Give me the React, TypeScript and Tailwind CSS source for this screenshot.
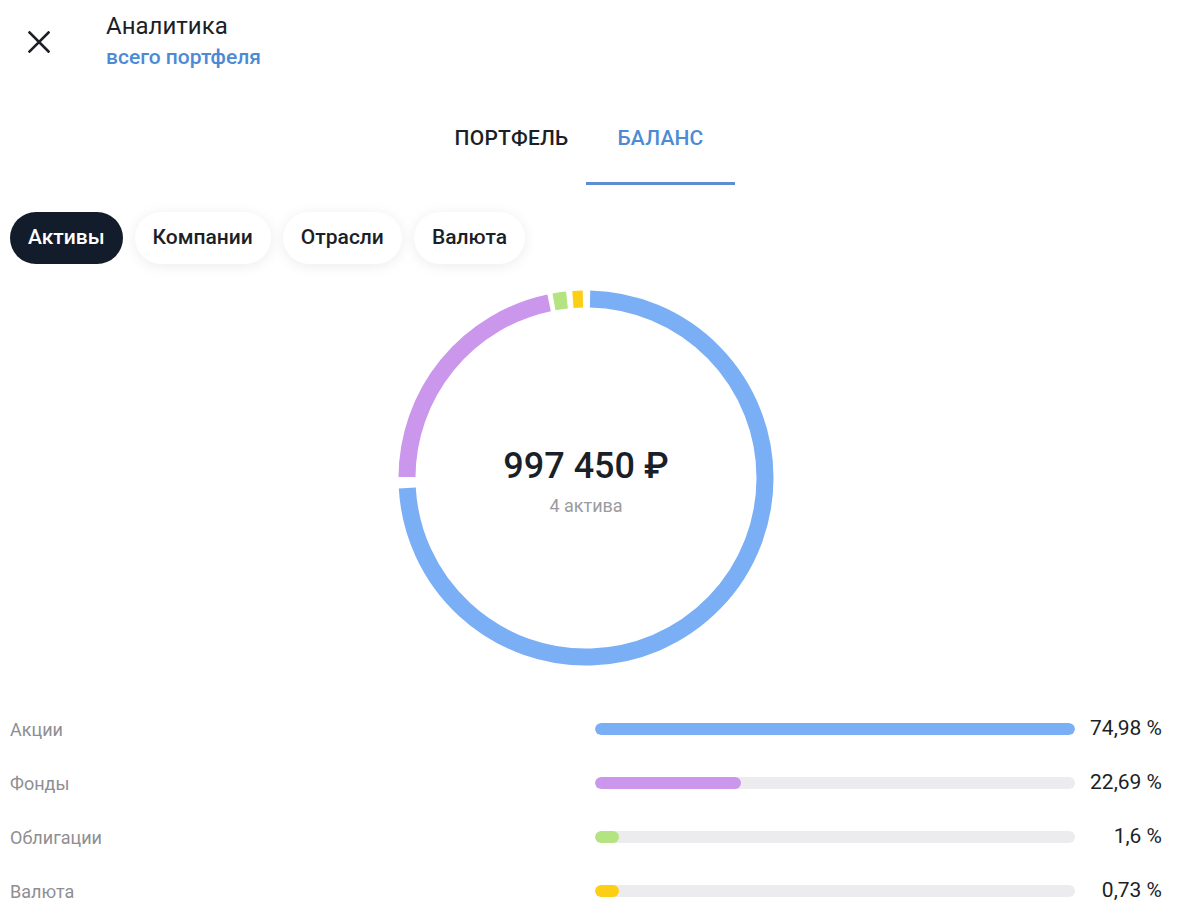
import React from "react";

const C = 188;
const R = 179;

function pt(a: number) {
  const rad = (a * Math.PI) / 180;
  return [C + R * Math.sin(rad), C - R * Math.cos(rad)];
}

function arc(a0: number, a1: number) {
  const [x0, y0] = pt(a0);
  const [x1, y1] = pt(a1);
  const large = a1 - a0 > 180 ? 1 : 0;
  return `M ${x0.toFixed(2)} ${y0.toFixed(2)} A ${R} ${R} 0 ${large} 1 ${x1.toFixed(2)} ${y1.toFixed(2)}`;
}

const segments = [
  { a0: 1.3, a1: 266.8, color: "#7aaef5" },
  { a0: 270.3, a1: 348.1, color: "#cb97ec" },
  { a0: 349.7, a1: 353.9, color: "#b4e482" },
  { a0: 355.8, a1: 359.0, color: "#fccf14" },
];

const rows = [
  { label: "Акции", text: "74,98 %", color: "#7aaef5", w: 100 },
  { label: "Фонды", text: "22,69 %", color: "#cb97ec", w: 30.4 },
  { label: "Облигации", text: "1,6 %", color: "#b4e482", w: 5 },
  { label: "Валюта", text: "0,73 %", color: "#fccf14", w: 5 },
];

export default function App() {
  return (
    <div
      className="w-[1172px] bg-white text-[#1b1f27]"
      style={{ fontFamily: "Roboto, 'Noto Sans', sans-serif" }}
    >
      {/* Header */}
      <div className="flex h-[90px]">
        <div className="w-[106px] flex items-start pl-[28px] pt-[31px]">
          <svg width="22" height="22" viewBox="0 0 22 22" fill="none">
            <path d="M1.5 1.5 L20.5 20.5 M20.5 1.5 L1.5 20.5" stroke="#1b1f27" strokeWidth="2.6" strokeLinecap="square" />
          </svg>
        </div>
        <div className="flex flex-col pt-[12px]">
          <div className="text-[24px] leading-[29px] font-normal">Аналитика</div>
          <div className="text-[21px] leading-[32px] font-medium text-[#4d8ad5]">всего портфеля</div>
        </div>
      </div>

      {/* Tabs */}
      <div className="flex justify-center">
        <div className="w-[149px] flex flex-col items-center">
          <div className="pt-[36px] text-[21px] leading-[24px] font-medium tracking-[0.2px] text-[#1b1f27]">ПОРТФЕЛЬ</div>
          <div className="mt-[32px] h-[3px] w-full bg-transparent" />
        </div>
        <div className="w-[149px] flex flex-col items-center">
          <div className="pt-[36px] text-[21px] leading-[24px] font-medium tracking-[0.2px] text-[#4d8ad5]">БАЛАНС</div>
          <div className="mt-[32px] h-[3px] w-full bg-[#5b8fd2]" />
        </div>
      </div>

      {/* Chips */}
      <div className="flex gap-[12px] px-[10px] mt-[27px]">
        <div className="h-[52px] px-[18px] rounded-full bg-[#131c2b] text-white text-[21px] font-medium flex items-center">Активы</div>
        <div className="h-[52px] px-[18px] rounded-full bg-white text-[21px] font-medium flex items-center shadow-[0_2px_14px_rgba(0,0,0,0.08)]">Компании</div>
        <div className="h-[52px] px-[18px] rounded-full bg-white text-[21px] font-medium flex items-center shadow-[0_2px_14px_rgba(0,0,0,0.08)]">Отрасли</div>
        <div className="h-[52px] px-[18px] rounded-full bg-white text-[21px] font-medium flex items-center shadow-[0_2px_14px_rgba(0,0,0,0.08)]">Валюта</div>
      </div>

      {/* Donut */}
      <div className="flex justify-center mt-[26px]">
        <div className="relative w-[376px] h-[376px]">
          <svg width="376" height="376" viewBox="0 0 376 376">
            {segments.map((s, i) => (
              <path key={i} d={arc(s.a0, s.a1)} stroke={s.color} strokeWidth="17" fill="none" strokeLinecap="butt" />
            ))}
          </svg>
          <div className="absolute inset-0 flex flex-col items-center justify-center pt-[7px]">
            <div className="text-[36px] leading-[42px] font-medium text-[#1b1f27]">997 450 ₽</div>
            <div className="text-[18px] leading-[24px] text-[#9b9ba0] mt-[7px]">4 актива</div>
          </div>
        </div>
      </div>

      {/* Rows */}
      <div className="flex flex-col px-[10px] mt-[36px] pb-[10px]">
        {rows.map((r) => (
          <div key={r.label} className="flex items-center h-[54px]">
            <div className="w-[585px] text-[18px] text-[#8e8e93]">{r.label}</div>
            <div className="w-[480px] h-[12px] rounded-full bg-[#ececef] overflow-hidden">
              <div className="h-full rounded-full" style={{ width: `${r.w}%`, backgroundColor: r.color }} />
            </div>
            <div className="w-[87px] text-right text-[21px] text-[#1b1f27]">{r.text}</div>
          </div>
        ))}
      </div>
    </div>
  );
}
